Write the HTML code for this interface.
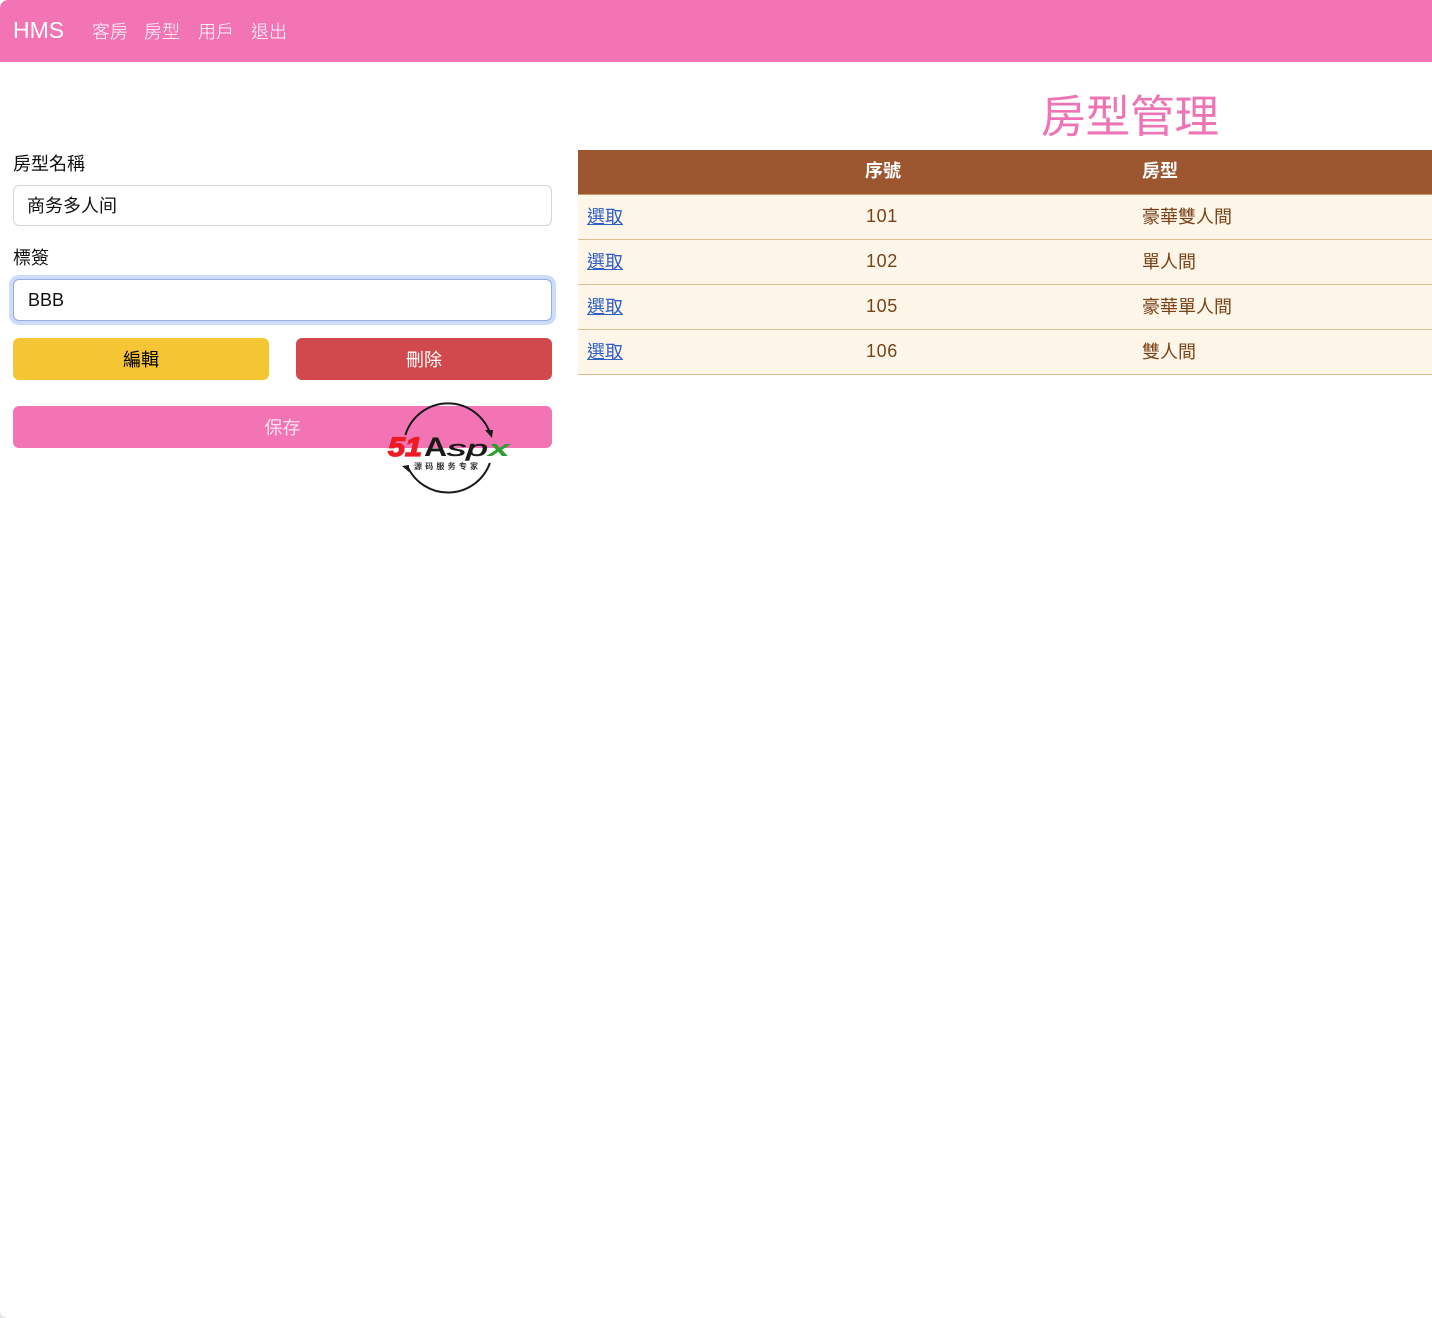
<!DOCTYPE html>
<html lang="zh-Hant"><head><meta charset="utf-8"><title>HMS</title>
<style>
*{box-sizing:border-box}
html,body{margin:0;padding:0;background:#fff}
body{position:relative;width:1432px;height:1318px;overflow:hidden;font-family:"Liberation Sans","Noto Sans CJK TC",sans-serif;font-size:18px;color:#111}
.a{position:absolute;white-space:nowrap;line-height:24px}
.nav{position:absolute;left:0;top:0;width:1432px;height:62px;background:#f374b4}
.w{color:#fff;font-weight:300}
.inp{position:absolute;left:13px;width:539px;height:41px;background:#fff;border:1px solid #d3d5d8;border-radius:6px;padding:0 13px;line-height:41px}
.btn{position:absolute;height:42px;border-radius:6px;text-align:center;line-height:45px}
.tb{position:absolute;left:578px;width:854px;height:45px;background:#fef6e8;border-bottom:1px solid #dcbd8c}
.tb span{position:absolute;top:9px;line-height:24px;color:#7a4317;white-space:nowrap}
.tb a{position:absolute;left:9px;top:10px;line-height:24px;color:#2f5fc4;text-decoration:underline}
.c1{left:288px;letter-spacing:.6px}.c2{left:564px;top:10px!important}
</style></head><body>
<div class="nav"></div>
<div class="a w" style="left:13px;top:17px;font-size:23px;line-height:26px">HMS</div>
<div class="a w" style="left:92px;top:20px">客房</div>
<div class="a w" style="left:144px;top:20px">房型</div>
<div class="a w" style="left:198px;top:20px">用戶</div>
<div class="a w" style="left:251px;top:20px">退出</div>
<div class="a" style="left:1041px;top:92px;font-size:44.5px;line-height:52px;color:#ee74b6;font-weight:400">房型管理</div>
<div class="a" style="left:13px;top:152px">房型名稱</div>
<div class="inp" style="top:185px">商务多人间</div>
<div class="a" style="left:13px;top:246px">標簽</div>
<div class="inp" style="top:279px;height:42px;padding:0 14px;border-color:#93aee6;box-shadow:0 0 0 4px #cddcfb;line-height:40px;color:#111">BBB</div>
<div class="btn" style="left:13px;top:338px;width:256px;background:#f6c533;color:#000">編輯</div>
<div class="btn" style="left:296px;top:338px;width:256px;background:#d1494c;color:#fff">刪除</div>
<div class="btn" style="left:13px;top:406px;width:539px;background:#f374b4;color:#fde3f0">保存</div>

<div style="position:absolute;left:578px;top:150px;width:854px;height:45px;background:#9c5730;border-bottom:1px solid #c99a6b"></div>
<div class="a" style="left:865px;top:159px;color:#fff;font-weight:700">序號</div>
<div class="a" style="left:1142px;top:159px;color:#fff;font-weight:700">房型</div>
<div class="tb" style="top:195px"><a>選取</a><span class="c1">101</span><span class="c2">豪華雙人間</span></div>
<div class="tb" style="top:240px"><a>選取</a><span class="c1">102</span><span class="c2">單人間</span></div>
<div class="tb" style="top:285px"><a>選取</a><span class="c1">105</span><span class="c2">豪華單人間</span></div>
<div class="tb" style="top:330px"><a>選取</a><span class="c1">106</span><span class="c2">雙人間</span></div>

<svg style="position:absolute;left:380px;top:395px" width="140" height="105" viewBox="0 0 140 105">
<path d="M25.400 40A44.500 44.500 0 0 1 110.600 40" fill="none" stroke="#1a1a1a" stroke-width="2"/>
<path d="M105 35l8 0-1 8z" fill="#1a1a1a"/>
<path d="M27.300 71A44.500 44.500 0 0 0 109.900 68" fill="none" stroke="#1a1a1a" stroke-width="2"/>
<path d="M22 71l7-1 0 7z" fill="#1a1a1a"/>
<text x="8" y="61" font-family="Liberation Sans" font-size="27" font-weight="700" font-style="italic" fill="#ed1c24" stroke="#ed1c24" stroke-width="1.300" textLength="34" lengthAdjust="spacingAndGlyphs">51</text>
<text x="44" y="61" font-family="Liberation Sans" font-size="27" font-weight="700" fill="#1a1a1a" textLength="23" lengthAdjust="spacingAndGlyphs">A</text>
<text x="67" y="61" font-family="Liberation Sans" font-size="22" font-weight="400" font-style="italic" fill="#1a1a1a" stroke="#1a1a1a" stroke-width=".5" textLength="41" lengthAdjust="spacingAndGlyphs">sp</text>
<text x="108" y="61" font-family="Liberation Sans" font-size="22" font-weight="700" font-style="italic" fill="#2f9e35" textLength="22" lengthAdjust="spacingAndGlyphs">x</text>
<text x="34" y="74" font-family="Noto Sans CJK SC,sans-serif" font-size="8" font-weight="700" fill="#333" letter-spacing="3.2">源码服务专家</text>
</svg>

<svg style="position:absolute;left:0;top:0" width="8" height="8"><path d="M0 0H8A8 8 0 0 0 0 8Z" fill="#fff"/></svg>
<svg style="position:absolute;left:0;top:1310px" width="8" height="8"><path d="M0 8V0A8 8 0 0 0 8 8Z" fill="#e6e6e6"/></svg>
</body></html>
